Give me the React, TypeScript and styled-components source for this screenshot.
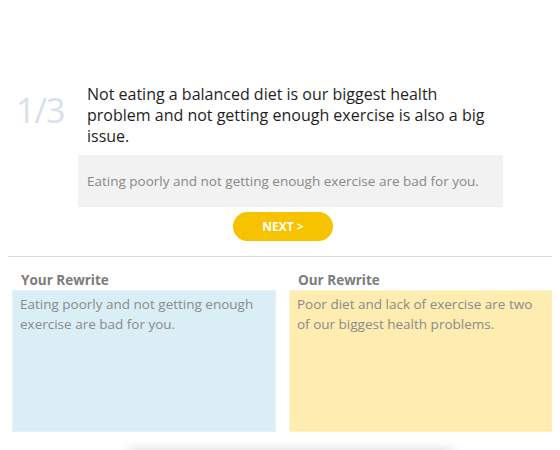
import React from 'react';
import styled, { createGlobalStyle } from 'styled-components';

const GlobalStyle = createGlobalStyle`
  body {
    margin: 8px;
    background: #fff;
    font-family: 'Open Sans', 'Noto Sans', sans-serif;
  }
`;

// Question

const Page = styled.div`
  padding-top: 76px;
`;

const QuestionRow = styled.div`
  display: flex;
  align-items: flex-start;
`;

const Counter = styled.div`
  width: 70px;
  padding-left: 8px;
  box-sizing: border-box;
  padding-top: 8px;
  font-size: 34px;
  line-height: 36px;
  color: #d6e1ed;
  letter-spacing: -1px;
`;

const QuestionBody = styled.div`
  width: 425px;
  display: flex;
  flex-direction: column;
`;

const Prompt = styled.p`
  margin: 0;
  padding: 0 9px;
  font-size: 16px;
  line-height: 21px;
  color: #1e1e1e;
`;

const Attempt = styled.div`
  margin-top: 8px;
  height: 52px;
  display: flex;
  align-items: center;
  padding: 0 9px;
  background: #f2f2f2;
  font-size: 13.5px;
  color: #888;
`;

const NextButton = styled.button`
  display: block;
  margin: 5px auto 0 225px;
  width: 100px;
  height: 29px;
  border: none;
  border-radius: 15px;
  background: #f7c200;
  color: #fff;
  font-family: inherit;
  font-size: 12px;
  font-weight: 700;
  cursor: pointer;
`;

const Divider = styled.hr`
  margin: 15px 0 0;
  width: 545px;
  border: none;
  border-top: 1px solid #dcdcdc;
`;

// Rewrites

const Compare = styled.div`
  display: grid;
  grid-template-columns: 264px 264px;
  column-gap: 13px;
  padding: 14px 0 0 4px;
`;

const Column = styled.div`
  display: flex;
  flex-direction: column;
`;

const Label = styled.div`
  padding-left: 9px;
  font-size: 13.5px;
  line-height: 19px;
  font-weight: 700;
  color: #7b7b7b;
`;

const RewriteBox = styled.div<{ $tone: 'blue' | 'yellow' }>`
  height: 142px;
  box-sizing: border-box;
  padding: 3px 7px;
  font-size: 13.5px;
  line-height: 20px;
  color: #8a8a8a;
  background: ${p => (p.$tone === 'blue' ? '#daeef5' : '#feecb0')};
  border: 1px solid ${p => (p.$tone === 'blue' ? '#e4f3f9' : '#fff3c8')};
`;

const NextCard = styled.div`
  margin: 20px auto 0 120px;
  width: 325px;
  height: 40px;
  background: #fff;
  box-shadow: 0 0 12px rgba(0, 0, 0, 0.22);
`;

const App: React.FC = () => (
  <>
    <GlobalStyle />
    <Page>
      <QuestionRow>
        <Counter>1/3</Counter>
        <QuestionBody>
          <Prompt>
            Not eating a balanced diet is our biggest health problem and not getting enough
            exercise is also a big issue.
          </Prompt>
          <Attempt>Eating poorly and not getting enough exercise are bad for you.</Attempt>
        </QuestionBody>
      </QuestionRow>
      <NextButton>NEXT &gt;</NextButton>
      <Divider />
      <Compare>
        <Column>
          <Label>Your Rewrite</Label>
          <RewriteBox $tone="blue">
            Eating poorly and not getting enough exercise are bad for you.
          </RewriteBox>
        </Column>
        <Column>
          <Label>Our Rewrite</Label>
          <RewriteBox $tone="yellow">
            Poor diet and lack of exercise are two of our biggest health problems.
          </RewriteBox>
        </Column>
      </Compare>
      <NextCard />
    </Page>
  </>
);

export default App;
